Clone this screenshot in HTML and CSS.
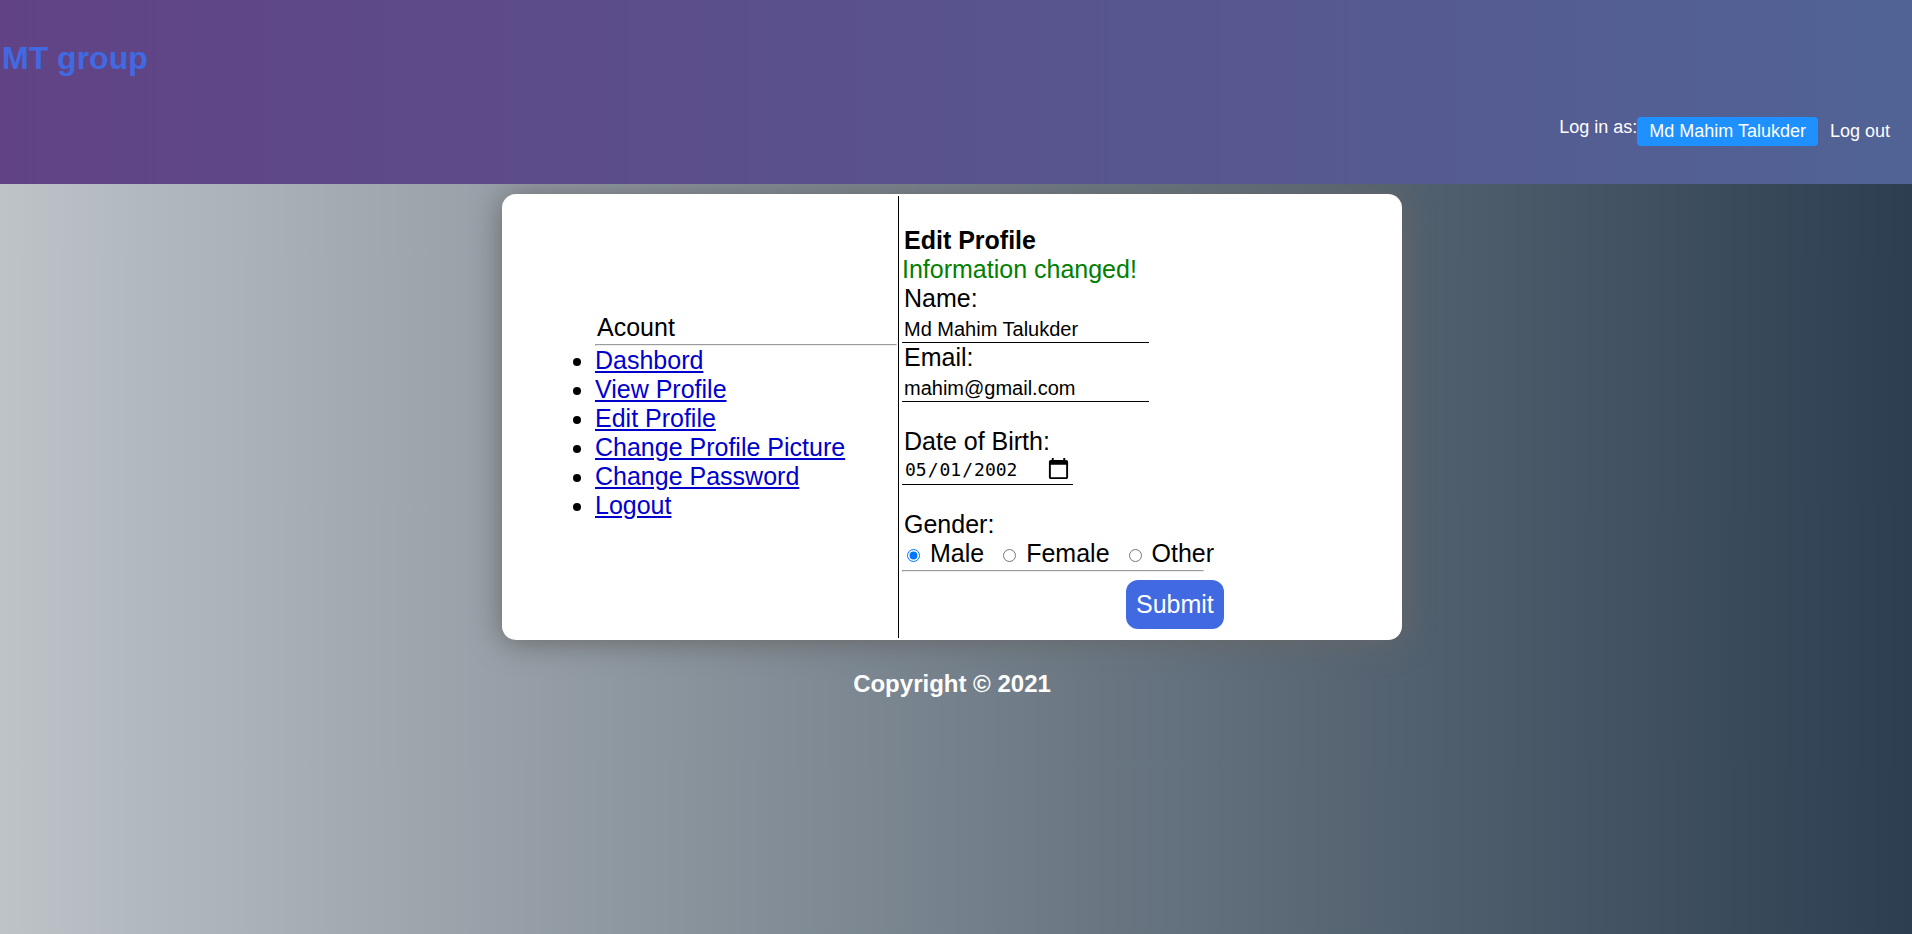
FILE: index.html
```
<!DOCTYPE html>
<html lang="en">
<head>
<meta charset="utf-8">
<title>Edit Profile</title>
<link rel="stylesheet" href="styles.css">
</head>
<body>
<header class="site-header">
  <h1 class="brand">MT group</h1>
  <nav class="user-nav">
    <span>Log in as:</span>
    <a class="nav-link nav-link-active" href="#">Md Mahim Talukder</a>
    <a class="nav-link" href="#">Log out</a>
  </nav>
</header>
<main class="page">
  <div class="card">
    <aside class="sidebar">
      <div class="sidebar-title">Acount</div>
      <hr class="rule">
      <ul class="menu">
        <li><a href="#">Dashbord</a></li>
        <li><a href="#">View Profile</a></li>
        <li><a href="#">Edit Profile</a></li>
        <li><a href="#">Change Profile Picture</a></li>
        <li><a href="#">Change Password</a></li>
        <li><a href="#">Logout</a></li>
      </ul>
    </aside>
    <form class="profile-form">
      <h2 class="form-title">Edit Profile</h2>
      <p class="message">Information changed!</p>
      <label class="label" for="name">Name:</label>
      <input class="field" id="name" type="text" value="Md Mahim Talukder">
      <label class="label" for="email">Email:</label>
      <input class="field" id="email" type="text" value="mahim@gmail.com">
      <label class="label label-spaced" for="dob">Date of Birth:</label>
      <input class="field field-date" id="dob" type="date" value="2002-05-01">
      <div class="label label-spaced" id="gender">Gender:</div>
      <div class="options" role="radiogroup" aria-labelledby="gender">
        <label class="option"><input type="radio" name="gender" checked>Male</label>
        <label class="option"><input type="radio" name="gender">Female</label>
        <label class="option"><input type="radio" name="gender">Other</label>
      </div>
      <hr class="rule rule-form">
      <button class="submit" type="submit">Submit</button>
    </form>
  </div>
</main>
<footer class="footer">Copyright © 2021</footer>
</body>
</html>
```
FILE: styles.css
```
* {
  box-sizing: border-box;
}

html {
  min-height: 100%;
  background: linear-gradient(to right, #bdc3c7, #2c3e50);
}

body {
  margin: 0;
  font-family: Arial, "Liberation Sans", sans-serif;
  font-size: 25px;
  line-height: 29px;
}

.site-header {
  position: relative;
  z-index: 1;
  padding: 40px 10px 38px 2px;
  background: linear-gradient(to right, #614385, #516395);
}

.brand {
  margin: 0 0 40px;
  color: royalblue;
  font-size: 32px;
  line-height: 37px;
}

.user-nav {
  display: flex;
  justify-content: flex-end;
  align-items: flex-start;
  color: white;
  font-size: 18px;
  line-height: 21px;
}

.nav-link {
  padding: 4px 12px;
  border-radius: 4px;
  color: white;
  text-decoration: none;
}

.nav-link-active {
  background: dodgerblue;
}

.page {
  padding: 10px 8px 0 0;
}

.card {
  display: flex;
  max-width: 900px;
  margin: 0 auto;
  padding: 2px;
  border-radius: 14px;
  background: white;
  box-shadow: 0 2px 30px #666;
}

.sidebar {
  flex: 0 0 395px;
  align-self: stretch;
  display: flex;
  flex-direction: column;
  justify-content: center;
  padding: 0 1px 2px 91px;
  border-right: 1px solid black;
}

.sidebar-title {
  padding: 0 2px;
}

.rule {
  width: 100%;
  margin: 2px 0 0;
}

.menu {
  margin: 0;
  padding: 0;
}

.menu a {
  color: #0000cd;
}

.profile-form {
  flex: 1;
  display: flex;
  flex-direction: column;
  align-items: flex-start;
  padding: 30px 3px 9px;
}

.form-title {
  margin: 0;
  padding: 0 2px;
  font-size: inherit;
}

.message {
  margin: 0;
  color: green;
}

.label {
  padding: 0 2px;
}

.label-spaced {
  margin-top: 25px;
}

.field {
  width: 247px;
  height: 30px;
  padding: 4px 2px 1px;
  border: 0;
  border-bottom: 1px solid black;
  background: transparent;
  color: black;
  font-family: inherit;
  font-size: 20px;
}

.field-date {
  width: 171px;
  height: 29px;
  padding: 0 2px 1px;
  font-family: Consolas, "DejaVu Sans Mono", monospace;
  font-size: 18px;
}

.field-date::-webkit-calendar-picker-indicator {
  width: 25px;
  height: 25px;
  padding: 0;
}

.options {
  display: flex;
  gap: 18px;
  padding: 0 4px;
}

.option {
  display: flex;
  align-items: center;
  gap: 10px;
}

.option input {
  width: 13px;
  height: 13px;
  margin: 3px 0 0 1px;
}

.rule-form {
  width: 302px;
  margin: 2px 0 8px;
}

.submit {
  margin-left: 224px;
  padding: 10px;
  border: 0;
  border-radius: 12px;
  background: royalblue;
  color: white;
  font: inherit;
}

.footer {
  padding: 29px 8px 20px 0;
  color: white;
  font-size: 24px;
  font-weight: bold;
  text-align: center;
}
```
